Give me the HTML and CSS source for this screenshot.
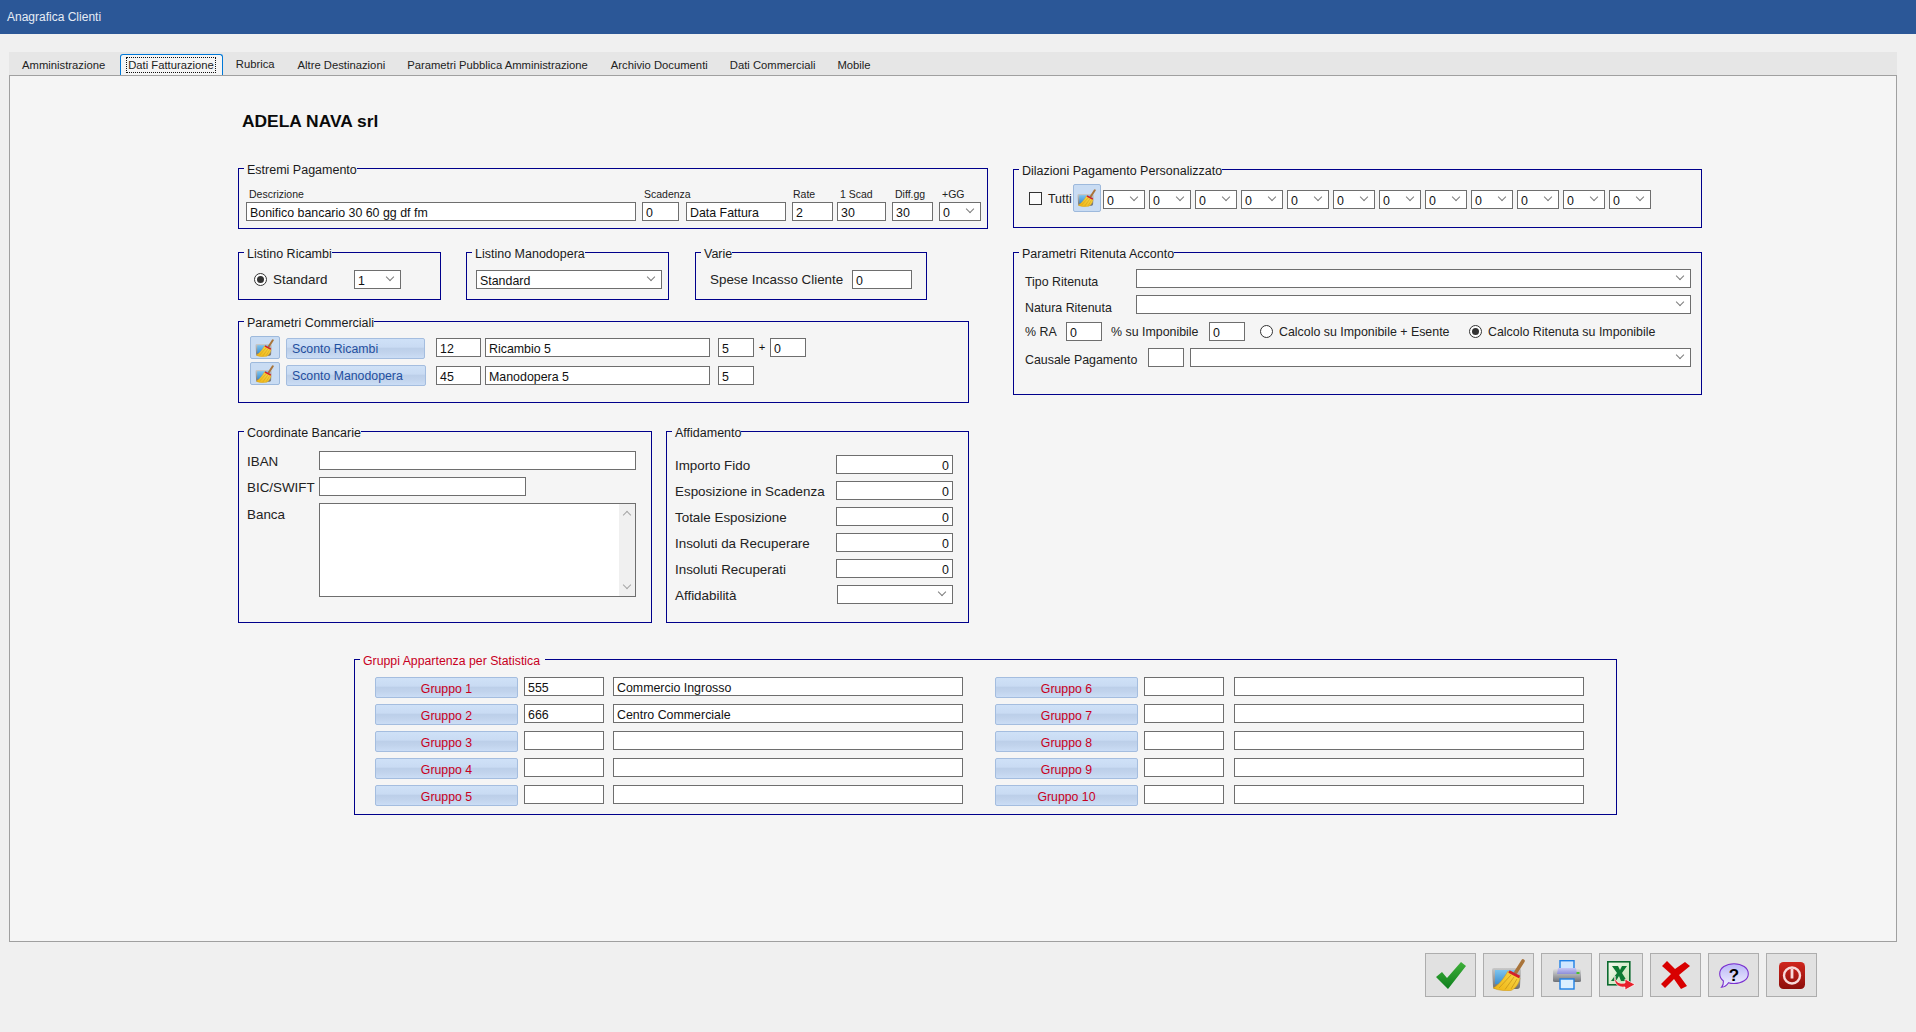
FILE: index.html
```html
<!DOCTYPE html>
<html lang="it">
<head>
<meta charset="utf-8">
<title>Anagrafica Clienti</title>
<link rel="stylesheet" href="styles.css">
</head>
<body>
<svg class="defs" width="0" height="0" aria-hidden="true">
  <defs>
    <linearGradient id="gScreen" x1="0" y1="0" x2="0" y2="1"><stop offset="0" stop-color="#7cc4ee"/><stop offset="1" stop-color="#3f8fd0"/></linearGradient>
    <linearGradient id="gFrame" x1="0" y1="0" x2="0" y2="1"><stop offset="0" stop-color="#c9c9c9"/><stop offset="1" stop-color="#6d6d6d"/></linearGradient>
    <linearGradient id="gStraw" x1="1" y1="0" x2="0" y2="1"><stop offset="0" stop-color="#f8d94a"/><stop offset="1" stop-color="#efb312"/></linearGradient>
    <linearGradient id="gGreen" x1="0" y1="0" x2="0" y2="1"><stop offset="0" stop-color="#3fb03a"/><stop offset="1" stop-color="#0f7f1e"/></linearGradient>
    <linearGradient id="gBubble" x1="0" y1="0" x2="0" y2="1"><stop offset="0" stop-color="#b9b6f6"/><stop offset="1" stop-color="#f2f2ff"/></linearGradient>
    <linearGradient id="gPower" x1="0" y1="0" x2="0" y2="1"><stop offset="0" stop-color="#d0261d"/><stop offset="1" stop-color="#8c0f0b"/></linearGradient>
    <linearGradient id="gPrinter" x1="0" y1="0" x2="0" y2="1"><stop offset="0" stop-color="#dcdcdc"/><stop offset="1" stop-color="#6f7278"/></linearGradient>
    <linearGradient id="gLav" x1="0" y1="0" x2="0" y2="1"><stop offset="0" stop-color="#c6c6f4"/><stop offset="1" stop-color="#8e8ed8"/></linearGradient>
    <linearGradient id="gXl" x1="0" y1="0" x2="1" y2="1"><stop offset="0" stop-color="#f4fbef"/><stop offset="1" stop-color="#bfe0b0"/></linearGradient>
    <symbol id="broom" viewBox="0 0 36 32">
      <path d="M1 11 Q1 9 3 9 H27 Q30 9 30 11 L29 27 Q29 30 26 30 H5 Q2 30 2 27 Z" fill="url(#gFrame)"/>
      <rect x="4" y="11" width="22" height="14" fill="url(#gScreen)"/>
      <path d="M32 2 L25 13" stroke="#a9743a" stroke-width="3.6" stroke-linecap="round"/>
      <path d="M17 12 L29 19 C28 25 24 30 20 31.5 C14 32 7 31.5 2 29 C8 26 13 19 17 12 Z" fill="url(#gStraw)" stroke="#c9951a" stroke-width=".5"/>
      <path d="M20 16 L8 29 M23 18 L14 30.5 M26 20 L20 30" stroke="#c9951a" stroke-width=".8" fill="none"/>
      <path d="M18 12.5 L28.5 18" stroke="#d3202a" stroke-width="2.8"/>
    </symbol>
    <symbol id="check" viewBox="0 0 30 27">
      <path d="M0 15 L6 10 L11 16 L25 0 L30 4 L12 27 Z" fill="url(#gGreen)"/>
    </symbol>
    <symbol id="cross" viewBox="0 0 29 28">
      <path d="M6 0 L14 8 L24 1 L29 5 L18 14 L26 25 L20 28 L13 18 L4 27 L0 23 L10 13 L1 5 Z" fill="#d80000"/>
    </symbol>
    <symbol id="printer" viewBox="0 0 28 30">
      <rect x="7" y="0.7" width="14" height="10" fill="#cfe6ff" stroke="#1f80e6" stroke-width="1.4"/>
      <path d="M2 9 H26 Q28 9 28 11 V21 Q28 22 26 22 H2 Q0 22 0 21 V11 Q0 9 2 9 Z" fill="url(#gPrinter)"/>
      <path d="M5 8 H23 L24 14 H4 Z" fill="url(#gLav)"/>
      <rect x="23.5" y="12" width="3" height="2" fill="#46c030"/>
      <rect x="7" y="19" width="14" height="10" fill="#dcefff" stroke="#1f80e6" stroke-width="1.4"/>
    </symbol>
    <symbol id="excel" viewBox="0 0 28 29">
      <rect x="0.8" y="0.8" width="22" height="23" fill="url(#gXl)" stroke="#0c6b30" stroke-width="1.6"/>
      <path d="M5 5 H11 L13 9 L15 5 H20 L15 12 L20 20 H14 L12 15 L9 20 H4 L10 12 Z" fill="#0c7a32"/>
      <path d="M8 15 C8 21 12 23 18 22 V18 L28 23.5 L18 29 V26 C11 27 6 22 8 15 Z" fill="#e8202c" stroke="#fff" stroke-width=".7"/>
    </symbol>
    <symbol id="help" viewBox="0 0 30 25">
      <path d="M15 .7 C23 .7 29.3 5 29.3 10.7 C29.3 16.5 23 20.5 15 20.5 C13 20.5 11 20.3 9.5 19.7 C8 22 5.5 24 2.5 24.3 C4 22.5 4.6 20.3 4.4 18 C2 16 .7 13.5 .7 10.7 C.7 5 7 .7 15 .7 Z" fill="url(#gBubble)" stroke="#7a2fd0" stroke-width="1.1"/>
      <text x="15" y="18" class="qmark" text-anchor="middle">?</text>
    </symbol>
    <symbol id="power" viewBox="0 0 26 27">
      <rect width="26" height="27" rx="4.5" fill="url(#gPower)"/>
      <circle cx="13" cy="13.5" r="8" fill="none" stroke="#f7dada" stroke-width="2.4"/>
      <rect x="11.6" y="7" width="2.8" height="9.5" fill="#f7dada"/>
    </symbol>
  </defs>
</svg>

<div class="page">
  <header class="titlebar">Anagrafica Clienti</header>

  <main class="shell">
    <nav class="tabs">
      <div class="tab">Amministrazione</div>
      <div class="tab tab-active"><span class="tab-focus">Dati Fatturazione</span></div>
      <div class="tab tab-up">Rubrica</div>
      <div class="tab">Altre Destinazioni</div>
      <div class="tab">Parametri Pubblica Amministrazione</div>
      <div class="tab tab-shift">Archivio Documenti</div>
      <div class="tab">Dati Commerciali</div>
      <div class="tab">Mobile</div>
    </nav>

    <section class="panel">
      <h1 class="company">ADELA NAVA srl</h1>

      <div class="columns">
        <div class="col-left">
          <!-- Estremi Pagamento -->
          <div class="group estremi">
            <span class="legend">Estremi Pagamento</span>
            <div class="row">
              <div class="cell w390"><span class="cap">Descrizione</span><div class="field">Bonifico bancario 30 60 gg df fm</div></div>
              <div class="cell w37 ml6"><span class="cap cap-mid">Scadenza</span><div class="field">0</div></div>
              <div class="cell w100 ml7"><span class="cap">&nbsp;</span><div class="field">Data Fattura</div></div>
              <div class="cell w41 ml6"><span class="cap cap-tight">Rate</span><div class="field">2</div></div>
              <div class="cell w49 ml4"><span class="cap">1 Scad</span><div class="field">30</div></div>
              <div class="cell w41 ml6"><span class="cap">Diff.gg</span><div class="field">30</div></div>
              <div class="cell w42 ml6"><span class="cap">+GG</span><div class="field combo">0</div></div>
            </div>
          </div>

          <!-- Listini / Varie -->
          <div class="band">
            <div class="group listino-ric">
              <span class="legend">Listino Ricambi</span>
              <div class="row row-center">
                <span class="radio on"></span>
                <span class="lbl w81 ml6">Standard</span>
                <div class="field combo w47">1</div>
              </div>
            </div>
            <div class="group listino-man">
              <span class="legend">Listino Manodopera</span>
              <div class="field combo w186">Standard</div>
            </div>
            <div class="group varie">
              <span class="legend">Varie</span>
              <div class="row row-center">
                <span class="lbl w142">Spese Incasso Cliente</span>
                <div class="field w60">0</div>
              </div>
            </div>
          </div>

          <!-- Parametri Commerciali -->
          <div class="group commerciali">
            <span class="legend">Parametri Commerciali</span>
            <div class="row">
              <button class="ico-btn" type="button"><svg class="ico-s"><use href="#broom"/></svg></button>
              <div class="blue-btn blue-s w139 ml6 mt2">Sconto Ricambi</div>
              <div class="field w45 ml11 mt2">12</div>
              <div class="field w225 ml4 mt2">Ricambio 5</div>
              <div class="field w36 ml8 mt2">5</div>
              <span class="plus mt2">+</span>
              <div class="field w36 mt2">0</div>
            </div>
            <div class="row mt3">
              <button class="ico-btn" type="button"><svg class="ico-s"><use href="#broom"/></svg></button>
              <div class="blue-btn blue-s w140 ml6 mt3">Sconto Manodopera</div>
              <div class="field w45 ml10 mt4">45</div>
              <div class="field w225 ml4 mt4">Manodopera 5</div>
              <div class="field w36 ml8 mt4">5</div>
            </div>
          </div>

          <!-- Coordinate / Affidamento -->
          <div class="band band-bank">
            <div class="group coord">
              <span class="legend">Coordinate Bancarie</span>
              <div class="row row-center"><span class="lbl w72">IBAN</span><div class="field w317"></div></div>
              <div class="row row-center mt7"><span class="lbl w72">BIC/SWIFT</span><div class="field w207"></div></div>
              <div class="row mt7">
                <span class="lbl w72 banca">Banca</span>
                <div class="memo">
                  <div class="memo-scroll"><span class="arrow-up"></span><span class="arrow-down"></span></div>
                </div>
              </div>
            </div>
            <div class="group affid">
              <span class="legend">Affidamento</span>
              <div class="row row-center"><span class="lbl w161">Importo Fido</span><div class="field num w117">0</div></div>
              <div class="row row-center mt7"><span class="lbl w161">Esposizione in Scadenza</span><div class="field num w117">0</div></div>
              <div class="row row-center mt7"><span class="lbl w161">Totale Esposizione</span><div class="field num w117">0</div></div>
              <div class="row row-center mt7"><span class="lbl w161">Insoluti da Recuperare</span><div class="field num w117">0</div></div>
              <div class="row row-center mt7"><span class="lbl w161">Insoluti Recuperati</span><div class="field num w117">0</div></div>
              <div class="row row-center mt7"><span class="lbl w162">Affidabilità</span><div class="field combo w116"></div></div>
            </div>
          </div>
        </div>

        <div class="col-right">
          <!-- Dilazioni -->
          <div class="group dilazioni">
            <span class="legend">Dilazioni Pagamento Personalizzato</span>
            <div class="row row-center">
              <span class="check"></span>
              <span class="lbl-s tutti">Tutti</span>
              <button class="ico-btn ico-btn-tall" type="button"><svg class="ico-s"><use href="#broom"/></svg></button>
              <div class="combos">
                <div class="field combo w42">0</div><div class="field combo w42">0</div><div class="field combo w42">0</div><div class="field combo w42">0</div>
                <div class="field combo w42">0</div><div class="field combo w42">0</div><div class="field combo w42">0</div><div class="field combo w42">0</div>
                <div class="field combo w42">0</div><div class="field combo w42">0</div><div class="field combo w42">0</div><div class="field combo w42">0</div>
              </div>
            </div>
          </div>

          <!-- Ritenuta -->
          <div class="group ritenuta">
            <span class="legend">Parametri Ritenuta Acconto</span>
            <div class="row row-center"><span class="lbl-s w111 nudge">Tipo Ritenuta</span><div class="field combo w555"></div></div>
            <div class="row row-center mt7"><span class="lbl-s w111 nudge">Natura Ritenuta</span><div class="field combo w555"></div></div>
            <div class="row row-center mt8">
              <span class="lbl-s w41">% RA</span>
              <div class="field w36">0</div>
              <span class="lbl-s w98 ml9">% su Imponibile</span>
              <div class="field w36">0</div>
              <span class="radio ml15"></span>
              <span class="lbl-s w190 ml6">Calcolo su Imponibile + Esente</span>
              <span class="radio on"></span>
              <span class="lbl-s ml6">Calcolo Ritenuta su Imponibile</span>
            </div>
            <div class="row row-center mt7">
              <span class="lbl-s w123 nudge-s">Causale Pagamento</span>
              <div class="field w36"></div>
              <div class="field combo w501 ml6"></div>
            </div>
          </div>
        </div>
      </div>

      <!-- Gruppi -->
      <div class="group gruppi">
        <span class="legend legend-red">Gruppi Appartenza per Statistica</span>
        <div class="gruppi-cols">
          <div class="gruppi-col">
            <div class="g-row"><div class="blue-btn blue-r w143">Gruppo 1</div><div class="field w80 ml6">555</div><div class="field w350 ml9">Commercio Ingrosso</div></div>
            <div class="g-row"><div class="blue-btn blue-r w143">Gruppo 2</div><div class="field w80 ml6">666</div><div class="field w350 ml9">Centro Commerciale</div></div>
            <div class="g-row"><div class="blue-btn blue-r w143">Gruppo 3</div><div class="field w80 ml6"></div><div class="field w350 ml9"></div></div>
            <div class="g-row"><div class="blue-btn blue-r w143">Gruppo 4</div><div class="field w80 ml6"></div><div class="field w350 ml9"></div></div>
            <div class="g-row"><div class="blue-btn blue-r w143">Gruppo 5</div><div class="field w80 ml6"></div><div class="field w350 ml9"></div></div>
          </div>
          <div class="gruppi-col gruppi-col2">
            <div class="g-row"><div class="blue-btn blue-r w143">Gruppo 6</div><div class="field w80 ml6"></div><div class="field w350 ml10"></div></div>
            <div class="g-row"><div class="blue-btn blue-r w143">Gruppo 7</div><div class="field w80 ml6"></div><div class="field w350 ml10"></div></div>
            <div class="g-row"><div class="blue-btn blue-r w143">Gruppo 8</div><div class="field w80 ml6"></div><div class="field w350 ml10"></div></div>
            <div class="g-row"><div class="blue-btn blue-r w143">Gruppo 9</div><div class="field w80 ml6"></div><div class="field w350 ml10"></div></div>
            <div class="g-row"><div class="blue-btn blue-r w143">Gruppo 10</div><div class="field w80 ml6"></div><div class="field w350 ml10"></div></div>
          </div>
        </div>
      </div>
    </section>
  </main>

  <footer class="actions">
    <button class="act" type="button"><svg class="i-check"><use href="#check"/></svg></button>
    <button class="act" type="button"><svg class="i-broom"><use href="#broom"/></svg></button>
    <button class="act" type="button"><svg class="i-printer"><use href="#printer"/></svg></button>
    <button class="act act-narrow" type="button"><svg class="i-excel"><use href="#excel"/></svg></button>
    <button class="act" type="button"><svg class="i-cross"><use href="#cross"/></svg></button>
    <button class="act" type="button"><svg class="i-help"><use href="#help"/></svg></button>
    <button class="act" type="button"><svg class="i-power"><use href="#power"/></svg></button>
  </footer>
</div>
</body>
</html>
```

FILE: styles.css
```css
* { box-sizing: border-box; }
html, body { margin: 0; padding: 0; }
body {
  background: #f0f0f0;
  color: #111;
  font-family: "Liberation Sans", Arial, sans-serif;
  font-size: 11.25px;
  overflow: hidden;
}
.defs { position: absolute; }
.qmark { font: bold 17px "Liberation Sans", sans-serif; fill: #000; }

.page { display: flex; flex-direction: column; width: 1916px; height: 1032px; }

.titlebar {
  height: 34px; flex: none;
  background: #2b5797;
  color: #e6ecf5;
  font-size: 12px;
  line-height: 34px;
  padding-left: 7px;
}

.shell { margin: 18px 19px 0 9px; width: 1888px; flex: none; }

.tabs {
  display: flex; height: 23px;
  background: #e6e6e6;
  padding-left: 2px;
}
.tab { padding: 0 11px; line-height: 27px; height: 23px; white-space: nowrap; color: #222; }
.tab-up { line-height: 25px; margin: 0 1px 0 -1px; }
.tab-shift { margin-left: 1px; }
.tab-active {
  margin: 2px 3px 0 4px; padding: 0 7px 0 6px; height: 21px; line-height: 20px;
  background: #f5f5f5;
  border: 1px solid #0078d7; border-bottom: 0;
  border-radius: 3px 3px 0 0;
  position: relative; z-index: 1;
  margin-bottom: -1px;
}
.tab-focus { display: inline-block; outline: 1px dotted #111; outline-offset: 0; padding: 0 1px; line-height: 14px; }

.panel {
  height: 867px;
  background: #f5f5f5;
  border: 1px solid #a0a0a0;
  padding-left: 228px;
}

.company {
  margin: 35px 0 37px 4px;
  font-size: 17.4px; line-height: 20px; font-weight: bold; color: #0a0a0a;
}

.columns { display: flex; }
.col-left { width: 750px; flex: none; }
.col-right { margin: 1px 0 0 25px; width: 689px; flex: none; }

.group { position: relative; border: 1px solid #00008b; }
.legend {
  position: absolute; left: 5px; top: -6px;
  padding: 0 0 0 3px; background: #f5f5f5;
  font-size: 12.5px;
  line-height: 14px; white-space: nowrap; color: #1a1a1a;
}
.legend-red { color: #c8001e; padding-right: 5px; font-size: 12.3px; }

.row { display: flex; }
.row-center { align-items: center; }
.ritenuta .row { height: 19px; }

.cell { display: flex; flex-direction: column; }
.cap { height: 14px; line-height: 12px; padding-left: 3px; font-size: 10.5px; color: #222; white-space: nowrap; }
.cap-mid { padding-left: 2px; }
.cap-tight { padding-left: 1px; }

.field {
  position: relative; flex: none;
  height: 19px;
  border: 1px solid #6e6e6e;
  background: #fff;
  padding: 2px 3px 0;
  line-height: 16px;
  font-size: 12.4px;
  color: #111;
  white-space: nowrap;
  overflow: hidden;
}
.num { text-align: right; }
.combo::after {
  content: ""; position: absolute; right: 7px; top: 3px;
  width: 5px; height: 5px;
  border-right: 1px solid #7d7d7d; border-bottom: 1px solid #7d7d7d;
  transform: rotate(45deg);
}

.lbl { font-size: 13.4px; color: #222; white-space: nowrap; flex: none; }
.lbl-s { font-size: 12.4px; color: #222; white-space: nowrap; flex: none; }
.nudge { padding-top: 6px; }
.nudge-s { padding-top: 4px; }
.coord .lbl, .affid .lbl { padding-top: 2px; }
.coord .banca { padding-top: 4px; }

.radio {
  position: relative; width: 13px; height: 13px; flex: none;
  border: 1px solid #333; border-radius: 50%; background: #fff;
}
.radio.on::after {
  content: ""; position: absolute; left: 2px; top: 2px;
  width: 7px; height: 7px; border-radius: 50%; background: #333;
}
.check { width: 13px; height: 13px; flex: none; border: 1px solid #333; background: #fbfbfb; }

.estremi { height: 61px; padding: 19px 0 0 7px; }
.band { display: flex; margin-top: 23px; }
.listino-ric { width: 203px; height: 48px; padding: 17px 0 0 15px; }
.listino-man { width: 203px; height: 48px; margin-left: 25px; padding: 17px 0 0 9px; }
.varie { width: 232px; height: 48px; margin-left: 26px; padding: 17px 0 0 14px; }

.commerciali { width: 731px; height: 82px; margin-top: 21px; padding: 14px 0 0 11px; }
.ico-btn {
  display: flex; align-items: center; justify-content: center;
  width: 30px; height: 23px; flex: none; padding: 0;
  background: #c9dcf3;
  border: 1px solid #9db9dc; border-radius: 2px;
}
.ico-btn-tall { width: 28px; height: 28px; margin: 0 0 0 2px; }
.ico-s { width: 20px; height: 18px; }
.blue-btn {
  flex: none; height: 21px; line-height: 21px;
  border: 1px solid #a4bddf; border-radius: 2px;
  background: linear-gradient(#cfe1f7 0, #c9dbf3 42%, #bccfe9 50%, #c1d3ec 70%, #cbddf5 100%);
  white-space: nowrap;
  font-size: 12.3px;
}
.blue-s { padding-left: 5px; color: #1f4f9f; }
.blue-r { text-align: center; color: #c8001e; line-height: 22px; }
.plus { width: 16px; text-align: center; line-height: 19px; }

.band-bank { margin-top: 28px; }
.coord { width: 414px; height: 192px; padding: 19px 0 0 8px; }
.memo {
  position: relative; width: 317px; height: 94px; flex: none;
  border: 1px solid #6e6e6e; background: #fff;
}
.memo-scroll {
  position: absolute; right: 0; top: 0; bottom: 0; width: 16px;
  background: #f0f0f0;
  display: flex; flex-direction: column; justify-content: space-between; align-items: center;
  padding: 8px 0;
}
.arrow-up, .arrow-down {
  width: 6px; height: 6px;
  border-left: 1px solid #a6a6a6; border-top: 1px solid #a6a6a6;
  transform: rotate(45deg);
}
.arrow-down { transform: rotate(225deg); }

.affid { width: 303px; height: 192px; margin-left: 14px; padding: 23px 0 0 8px; }

.dilazioni { height: 59px; padding: 14px 0 0 15px; }
.tutti { margin-left: 6px; width: 23px; padding-top: 2px; }
.combos { display: flex; gap: 4px; margin: 3px 0 0 2px; }

.ritenuta { height: 143px; margin-top: 24px; padding: 16px 0 0 11px; }

.gruppi { width: 1263px; height: 156px; margin: 36px 0 0 116px; padding: 17px 0 0 20px; }
.gruppi-cols { display: flex; }
.gruppi-col { display: flex; flex-direction: column; gap: 6px; }
.gruppi-col2 { margin-left: 32px; }
.g-row { display: flex; height: 21px; }

.actions {
  display: flex; gap: 7px; justify-content: flex-end;
  margin-top: 11px; padding-right: 99px;
}
.act {
  display: flex; align-items: center; justify-content: center;
  width: 51px; height: 44px; padding: 0;
  background: #e1e1e1; border: 1px solid #adadad;
}
.act-narrow { width: 44px; }
.i-check { width: 30px; height: 27px; }
.i-broom { width: 36px; height: 32px; }
.i-printer { width: 28px; height: 30px; }
.i-excel { width: 28px; height: 29px; }
.i-cross { width: 29px; height: 28px; }
.i-help { width: 30px; height: 25px; }
.i-power { width: 26px; height: 27px; }

.w36 { width: 36px; } .w37 { width: 37px; } .w41 { width: 41px; } .w42 { width: 42px; }
.w45 { width: 45px; } .w47 { width: 47px; } .w49 { width: 49px; } .w60 { width: 60px; }
.w72 { width: 72px; } .w80 { width: 80px; } .w81 { width: 81px; } .w98 { width: 98px; }
.w100 { width: 100px; } .w111 { width: 111px; } .w116 { width: 116px; } .w117 { width: 117px; }
.w123 { width: 123px; } .w139 { width: 139px; } .w140 { width: 140px; } .w142 { width: 142px; } .w143 { width: 143px; }
.w161 { width: 161px; } .w162 { width: 162px; } .w186 { width: 186px; }
.w190 { width: 190px; } .w207 { width: 207px; } .w225 { width: 225px; } .w317 { width: 317px; }
.w350 { width: 350px; } .w390 { width: 390px; } .w501 { width: 501px; } .w555 { width: 555px; }
.ml4 { margin-left: 4px; } .ml6 { margin-left: 6px; } .ml7 { margin-left: 7px; } .ml8 { margin-left: 8px; }
.ml9 { margin-left: 9px; } .ml10 { margin-left: 10px; } .ml11 { margin-left: 11px; } .ml15 { margin-left: 15px; }
.mt2 { margin-top: 2px; } .mt3 { margin-top: 3px; } .mt4 { margin-top: 4px; } .mt7 { margin-top: 7px; } .mt8 { margin-top: 8px; }
```
